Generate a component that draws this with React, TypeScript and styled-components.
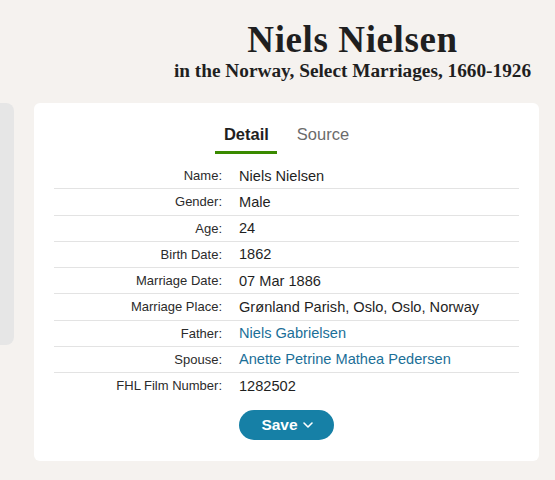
import React, { ReactElement } from "react";
import styled, { createGlobalStyle } from "styled-components";

const GlobalStyle = createGlobalStyle`
  body {
    margin: 0;
    background: #f5f2ef;
    font-family: "Liberation Sans", Arial, sans-serif;
    color: #1f1f1f;
  }
`;

const Page = styled.div`
  width: 555px;
  height: 480px;
  overflow: hidden;
`;

const Header = styled.header`
  padding: 19px 0 0 150px;
  text-align: center;
  font-family: "Liberation Serif", "Times New Roman", serif;
  color: #1f1f1f;
  height: 83px;
  box-sizing: border-box;
  h1 {
    margin: 0;
    font-size: 37px;
    line-height: 41px;
    font-weight: 700;
    letter-spacing: 0.6px;
  }
  h2 {
    margin: 0;
    font-size: 19.3px;
    line-height: 22px;
    font-weight: 700;
    letter-spacing: 0;
  }
`;

const Content = styled.div`
  display: flex;
  align-items: flex-start;
  margin-top: 20px;
`;

const Sidebar = styled.aside`
  width: 14px;
  height: 242px;
  background: #e6e6e6;
  border-radius: 0 8px 8px 0;
  margin-right: 20px;
  flex-shrink: 0;
`;

const Card = styled.section`
  width: 505px;
  background: #fff;
  border-radius: 6px;
  padding: 16px 20px 21px;
  box-sizing: border-box;
`;

const Tabs = styled.nav`
  display: flex;
  justify-content: center;
  gap: 11px;
  margin-bottom: 9px;
`;

const Tab = styled.div<{ $active?: boolean }>`
  padding: 5px 8.5px 7px;
  font-size: 16.5px;
  line-height: 20px;
  font-weight: ${(p) => (p.$active ? 700 : 400)};
  color: ${(p) => (p.$active ? "#1f1f1f" : "#6b6b6b")};
  border-bottom: 3px solid ${(p) => (p.$active ? "#3a8a00" : "transparent")};
`;

const Row = styled.div`
  display: flex;
  align-items: center;
  height: 25.25px;
  border-bottom: 1px solid #e3e3e3;
  &:last-of-type {
    border-bottom: none;
  }
`;

const Label = styled.div`
  width: 168px;
  padding-right: 17px;
  text-align: right;
  font-size: 13px;
  color: #2b2b2b;
  flex-shrink: 0;
`;

const Value = styled.div<{ $link?: boolean }>`
  font-size: 14.6px;
  color: ${(p) => (p.$link ? "#1b6f98" : "#1f1f1f")};
`;

const Actions = styled.div`
  padding: 12px 0 0 185px;
`;

const SaveButton = styled.button`
  display: inline-flex;
  align-items: center;
  justify-content: center;
  gap: 4px;
  width: 95px;
  height: 30px;
  border: none;
  border-radius: 15px;
  background: #1680a6;
  color: #fff;
  font-family: "Liberation Sans", Arial, sans-serif;
  font-size: 15.5px;
  font-weight: 700;
  cursor: pointer;
  padding: 0 0 0 2px;
`;

type Fact = { label: string; value: string; link?: boolean };

const facts: Fact[] = [
  { label: "Name:", value: "Niels Nielsen" },
  { label: "Gender:", value: "Male" },
  { label: "Age:", value: "24" },
  { label: "Birth Date:", value: "1862" },
  { label: "Marriage Date:", value: "07 Mar 1886" },
  { label: "Marriage Place:", value: "Grønland Parish, Oslo, Oslo, Norway" },
  { label: "Father:", value: "Niels Gabrielsen", link: true },
  { label: "Spouse:", value: "Anette Petrine Mathea Pedersen", link: true },
  { label: "FHL Film Number:", value: "1282502" },
];

const App = (): ReactElement => (
  <Page>
    <GlobalStyle />
    <Header>
      <h1>Niels Nielsen</h1>
      <h2>in the Norway, Select Marriages, 1660-1926</h2>
    </Header>
    <Content>
      <Sidebar />
      <Card>
        <Tabs>
          <Tab $active>Detail</Tab>
          <Tab>Source</Tab>
        </Tabs>
        <div>
          {facts.map((f) => (
            <Row key={f.label}>
              <Label>{f.label}</Label>
              <Value $link={f.link}>{f.value}</Value>
            </Row>
          ))}
        </div>
        <Actions>
          <SaveButton>
            Save
            <svg width="12" height="12" viewBox="0 0 12 12" fill="none">
              <path
                d="M2 4l4 4 4-4"
                stroke="#fff"
                strokeWidth="1.6"
                strokeLinecap="round"
                strokeLinejoin="round"
              />
            </svg>
          </SaveButton>
        </Actions>
      </Card>
    </Content>
  </Page>
);

export default App;
